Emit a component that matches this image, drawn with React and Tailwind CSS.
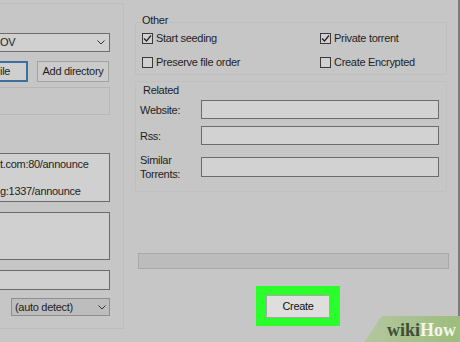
import React from "react";

const font = { fontFamily: '"Liberation Sans", Arial, sans-serif' };

const Check = ({ checked }) => (
  <span className="w-[11px] h-[11px] border border-[#3a3a3a] bg-[#d0d0d0] flex items-center justify-center shrink-0">
    {checked && (
      <svg width="9" height="9" viewBox="0 0 9 9">
        <path d="M1 4.5 L3.5 7 L8 1.5" fill="none" stroke="#222" strokeWidth="1.2" />
      </svg>
    )}
  </span>
);

const Chevron = () => (
  <svg width="8" height="5" viewBox="0 0 8 5" className="shrink-0">
    <path d="M0.5 0.5 L4 4 L7.5 0.5" fill="none" stroke="#333" strokeWidth="1" />
  </svg>
);

const Option = ({ checked, label }) => (
  <div className="flex items-center gap-[3px] h-[12px]">
    <Check checked={checked} />
    <span className="text-[11px] tracking-[-0.3px] text-[#1e1e1e] leading-none whitespace-nowrap">{label}</span>
  </div>
);

const Field = ({ label, second, h = "h-[19px]", mt }) => (
  <div className={`flex items-center ${mt}`}>
    <div className="w-[61px] text-[11px] tracking-[-0.3px] text-[#1e1e1e] leading-[14px]">
      {label}
      {second && <br />}
      {second}
    </div>
    <div className={`w-[238px] ${h} bg-[#d2d2d2] border border-[#6b6b6b]`} />
  </div>
);

const txt = "text-[11px] tracking-[-0.3px] text-[#1e1e1e] whitespace-nowrap";

export default function App() {
  return (
    <div
      className="w-[460px] h-[342px] bg-[#c6c6c6] relative overflow-hidden flex"
      style={font}
    >
      {/* left column */}
      <div className="w-[124px] shrink-0 flex flex-col border-r border-b border-[#bdbdbd] h-[326px] mt-[3px] border-t">
        <div className="mt-[29px] w-[110px] h-[19px] bg-[#d0d0d0] border border-[#6e6e6e] border-l-0 flex items-center justify-between pr-[4px]">
          <span className={`${txt} leading-none`}>OV</span>
          <Chevron />
        </div>
        <div className="mt-[9px] flex items-center gap-[9px] h-[21px]">
          <div className="w-[28px] h-[21px] bg-[#cfcfcf] border-2 border-l-0 border-[#3d6e9e] flex items-center">
            <span className={`${txt} leading-none`}>ile</span>
          </div>
          <div className="w-[72px] h-[21px] bg-[#cbcbcb] border border-[#a2a2a2] flex items-center justify-center">
            <span className={`${txt} leading-none`}>Add directory</span>
          </div>
        </div>
        <div className="mt-[5px] w-[110px] h-[28px] border border-l-0 border-[#b7b7b7]" />
        <div className="mt-[38px] w-[110px] h-[49px] bg-[#d0d0d0] border border-l-0 border-[#6b6b6b] flex flex-col justify-between py-[2px]">
          <span className={`${txt} leading-[16px]`}>t.com:80/announce</span>
          <span className={`${txt} leading-[16px]`}>g:1337/announce</span>
        </div>
        <div className="mt-[10px] w-[110px] h-[48px] bg-[#d0d0d0] border border-l-0 border-[#6b6b6b]" />
        <div className="mt-[10px] w-[110px] h-[20px] bg-[#d0d0d0] border border-l-0 border-[#6b6b6b]" />
        <div className="mt-[8px] ml-[11px] w-[99px] h-[18px] bg-[#bdbdbd] border border-[#8e8e8e] flex items-center justify-between px-[3px]">
          <span className={`${txt} leading-none`}>(auto detect)</span>
          <Chevron />
        </div>
      </div>

      {/* right column */}
      <div className="flex flex-col ml-[11px] w-[314px]">
        <div className="mt-[22px] relative w-[312px] h-[53px] border border-[#bfbfbf] rounded-[2px] grid grid-cols-[178px_1fr] content-start gap-y-[12px] pt-[9px] pl-[6px]">
          <span className={`absolute left-[5px] top-[-10px] leading-[14px] px-[1px] ${txt}`}>Other</span>
          <Option checked label="Start seeding" />
          <Option checked label="Private torrent" />
          <Option label="Preserve file order" />
          <Option label="Create Encrypted" />
        </div>
        <div className="mt-[6px] relative w-[312px] h-[111px] border border-[#c0c0c0] rounded-[2px] pl-[4px]">
          <span className={`absolute left-[7px] top-[1px] leading-[14px] ${txt}`}>Related</span>
          <Field label="Website:" mt="mt-[18px]" />
          <Field label="Rss:" mt="mt-[7px]" />
          <Field label="Similar" second="Torrents:" h="h-[20px]" mt="mt-[8px]" />
        </div>
        <div className="mt-[61px] ml-[3px] w-[311px] h-[16px] bg-[#bcbcbc] border border-[#a9a9a9]" />
        <div className="mt-[17px] ml-[121px] w-[84px] h-[40px] bg-[#2bff2b] flex items-center justify-center">
          <div className="w-[64px] h-[23px] bg-[#dedede] border border-[#a8a8a8] flex items-center justify-center">
            <span className={`${txt} leading-none text-[#111]`}>Create</span>
          </div>
        </div>
      </div>

      <div className="absolute right-0 top-0 w-[2px] h-full bg-[#7c7c7c]" />

      {/* wikiHow badge */}
      <div
        className="absolute right-0 bottom-0 w-[96px] h-[26px] bg-gradient-to-r from-[#b4c6a0] to-[#9cbd7c] flex items-end justify-end pr-[4px] pb-[3px]"
        style={{ clipPath: "polygon(18px 0, 100% 0, 100% 100%, 0 100%)" }}
      >
        <span className="text-[18px] font-bold leading-none" style={{ fontFamily: '"Liberation Serif", serif' }}>
          <span className="text-[#3e4d36]">wiki</span>
          <span className="text-[#f2f7e8]">How</span>
        </span>
      </div>
    </div>
  );
}
